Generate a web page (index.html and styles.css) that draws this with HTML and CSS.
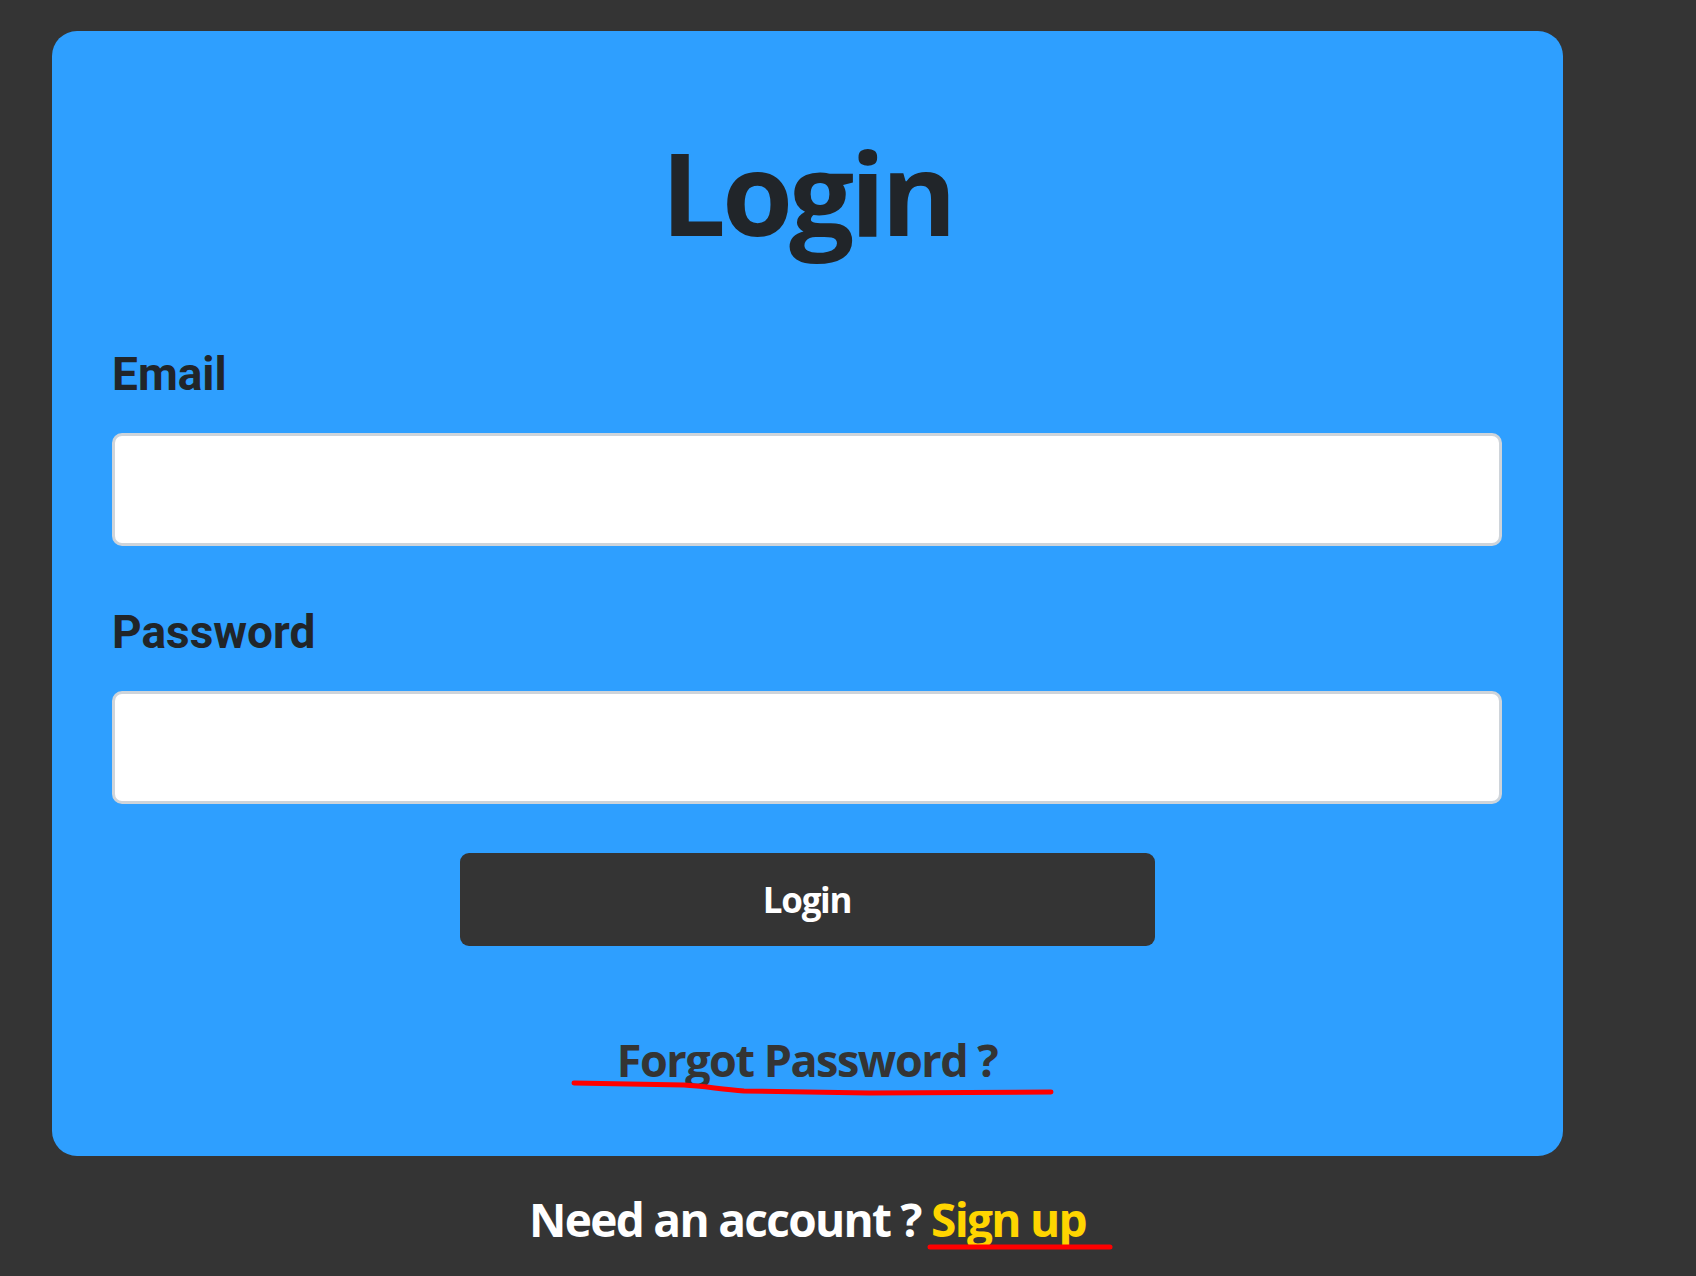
FILE: index.html
```html
<!DOCTYPE html>
<html lang="en">
<head>
<meta charset="utf-8">
<title>Login</title>
<link rel="stylesheet" href="styles.css">
</head>
<body>
<main class="page">
  <section class="card">
    <h1 class="title">Login</h1>
    <form class="form">
      <label class="label" for="email">Email</label>
      <input class="input" id="email" type="email">
      <label class="label label-pw" for="password">Password</label>
      <input class="input" id="password" type="password">
      <button class="btn" type="button">Login</button>
    </form>
    <div class="forgot-row">
      <a class="forgot" href="#">Forgot Password ?
        <svg class="scribble scribble-forgot" width="490" height="20" viewBox="0 0 490 20"><path d="M5 5 L115 7 C135 8 150 11 175 13 L300 15 L482 14" fill="none" stroke="#ff0000" stroke-width="5" stroke-linecap="round" stroke-linejoin="round"/></svg>
      </a>
    </div>
  </section>
  <p class="signup">Need an account ? <a class="signup-link" href="#">Sign up<svg class="scribble scribble-signup" width="186" height="10" viewBox="0 0 186 10"><path d="M3 5 L183 5" fill="none" stroke="#ff0000" stroke-width="5" stroke-linecap="round"/></svg></a></p>
</main>
</body>
</html>
```

FILE: styles.css
```css
html, body {
  margin: 0;
  padding: 0;
  background: #343434;
}
body {
  font-family: "Open Sans", "Noto Sans", sans-serif;
}
.page {
  box-sizing: border-box;
  min-height: 1276px;
  padding: 31px 133px 0 52px;
  display: flex;
  flex-direction: column;
}
.card {
  background: #2e9fff;
  border-radius: 25px;
  padding: 103px 61px 74px 60px;
  display: flex;
  flex-direction: column;
  height: 948px;
}
.title {
  margin: 0;
  text-align: center;
  font-family: "Open Sans", sans-serif;
  font-weight: 700;
  font-size: 115px;
  line-height: 1;
  color: #212529;
  letter-spacing: -4px;
}
.form {
  display: flex;
  flex-direction: column;
  margin-top: 102px;
}
.label {
  font-family: Roboto, "Liberation Sans", sans-serif;
  font-weight: 700;
  font-size: 46px;
  line-height: 1;
  color: #212529;
}
.label-pw {
  margin-top: 63px;
}
.input {
  margin-top: 36px;
  height: 113px;
  box-sizing: border-box;
  border: 3px solid #ced4da;
  border-radius: 10px;
  background: #fff;
  font-size: 30px;
}
.btn {
  margin: 49px auto 0;
  width: 695px;
  height: 93px;
  border: none;
  border-radius: 9px;
  background: #343434;
  color: #fff;
  font-family: "Open Sans", sans-serif;
  font-weight: 700;
  font-size: 35px;
  letter-spacing: -1.3px;
}
.forgot-row {
  margin-top: 91px;
  text-align: center;
}
.forgot {
  position: relative;
  display: inline-block;
  font-weight: 700;
  font-size: 45px;
  line-height: 1;
  color: #343434;
  text-decoration: none;
  letter-spacing: -1.5px;
}
.scribble {
  position: absolute;
  display: block;
}
.scribble-forgot {
  left: -48px;
  top: 41px;
}
.signup {
  margin: 40px 0 0;
  text-align: center;
  font-weight: 700;
  font-size: 46px;
  line-height: 1;
  color: #fff;
  letter-spacing: -1.7px;
}
.signup-link {
  position: relative;
  display: inline-block;
  line-height: 1;
  color: #ffd500;
  text-decoration: none;
}
.scribble-signup {
  left: -4px;
  top: 46px;
}
```
